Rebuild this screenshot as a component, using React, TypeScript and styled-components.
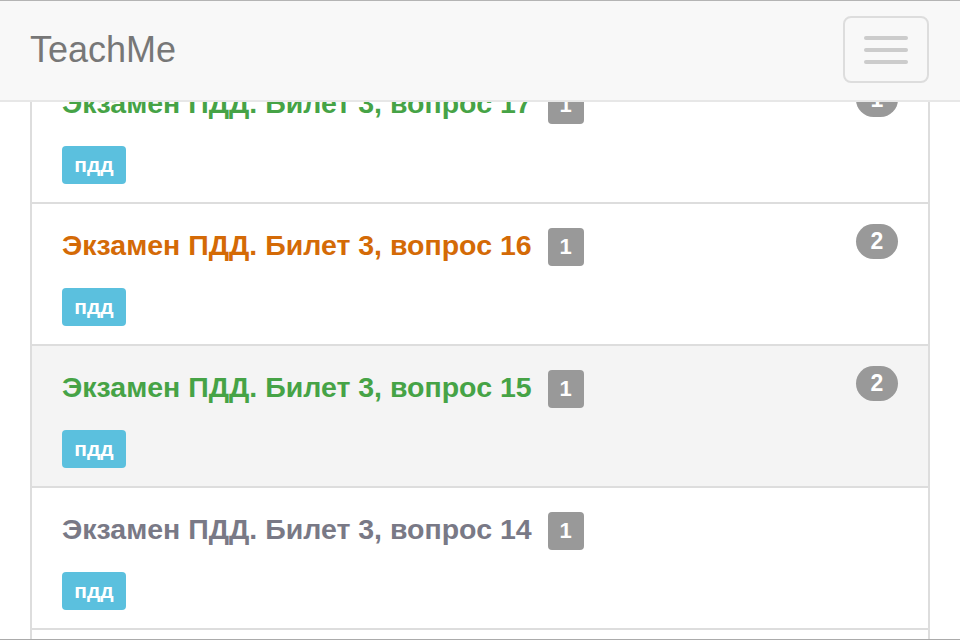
import React from "react";
import styled, { createGlobalStyle } from "styled-components";

const GlobalStyle = createGlobalStyle`
  html, body { margin: 0; padding: 0; background: #ffffff; }
  body { font-family: "Liberation Sans", Arial, Helvetica, sans-serif; }
  * { box-sizing: border-box; }
`;

const Navbar = styled.header`
  position: fixed;
  top: 0;
  left: 0;
  right: 0;
  height: 102px;
  z-index: 10;
  display: flex;
  align-items: center;
  justify-content: space-between;
  padding: 0 30px;
  background: #f8f8f8;
  border-top: 1px solid #b4b4b4;
  border-bottom: 2px solid #e7e7e7;
`;

const Brand = styled.a`
  font-size: 36px;
  color: #777777;
  text-decoration: none;
  line-height: 1;
  margin-top: -1px;
`;

const Toggle = styled.button`
  width: 86px;
  height: 67px;
  margin-top: -2px;
  margin-right: 1px;
  border: 2px solid #dddddd;
  border-radius: 8px;
  background: transparent;
  display: flex;
  flex-direction: column;
  align-items: center;
  justify-content: center;
  gap: 8px;
  padding: 0;
`;

const Bar = styled.span`
  display: block;
  width: 44px;
  height: 4px;
  border-radius: 2px;
  background: #cccccc;
`;

const Page = styled.main`
  height: 640px;
  overflow: hidden;
  padding: 60px 30px 0;
`;

const List = styled.div`
  border-left: 2px solid #dddddd;
  border-right: 2px solid #dddddd;
`;

const Item = styled.div<{ $active?: boolean }>`
  border-top: 2px solid #dddddd;
  background: ${(p) => (p.$active ? "#f4f4f4" : "#ffffff")};
  padding: 24px 30px 18px;
`;

const Head = styled.div`
  display: flex;
  align-items: center;
  height: 38px;
`;

const Title = styled.a<{ $color: string }>`
  font-size: 28.5px;
  font-weight: bold;
  color: ${(p) => p.$color};
  text-decoration: none;
  line-height: 1;
  margin-top: -4px;
`;

const Label = styled.span`
  margin-left: 16px;
  width: 36px;
  height: 38px;
  border-radius: 4px;
  background: #999999;
  color: #ffffff;
  font-size: 22px;
  font-weight: bold;
  display: flex;
  align-items: center;
  justify-content: center;
`;

const Badge = styled.span`
  margin-left: auto;
  align-self: flex-start;
  margin-top: -4px;
  min-width: 42px;
  height: 35px;
  padding: 0 13px;
  border-radius: 18px;
  background: #999999;
  color: #ffffff;
  font-size: 23px;
  font-weight: bold;
  display: flex;
  align-items: center;
  justify-content: center;
`;

const Tag = styled.span`
  margin-top: 22px;
  width: 64px;
  height: 38px;
  border-radius: 4px;
  background: #5bc0de;
  color: #ffffff;
  font-size: 21px;
  font-weight: bold;
  display: flex;
  align-items: center;
  justify-content: center;
`;

const BottomEdge = styled.div`
  position: fixed;
  left: 0;
  right: 0;
  bottom: 0;
  height: 1px;
  background: #ababab;
`;

type Q = { n: number; color: string; count?: number; active?: boolean };

const questions: Q[] = [
  { n: 17, color: "#46a346", count: 1 },
  { n: 16, color: "#d46a06", count: 2 },
  { n: 15, color: "#46a346", count: 2, active: true },
  { n: 14, color: "#797986" },
  { n: 13, color: "#797986" },
];

export default function App() {
  return (
    <>
      <GlobalStyle />
      <Navbar>
        <Brand href="#">TeachMe</Brand>
        <Toggle aria-label="Toggle navigation">
          <Bar />
          <Bar />
          <Bar />
        </Toggle>
      </Navbar>
      <Page>
        <List>
          {questions.map((q) => (
            <Item key={q.n} $active={q.active}>
              <Head>
                <Title href="#" $color={q.color}>
                  Экзамен ПДД. Билет 3, вопрос {q.n}
                </Title>
                <Label>1</Label>
                {q.count ? <Badge>{q.count}</Badge> : null}
              </Head>
              <Tag>пдд</Tag>
            </Item>
          ))}
        </List>
      </Page>
      <BottomEdge />
    </>
  );
}
